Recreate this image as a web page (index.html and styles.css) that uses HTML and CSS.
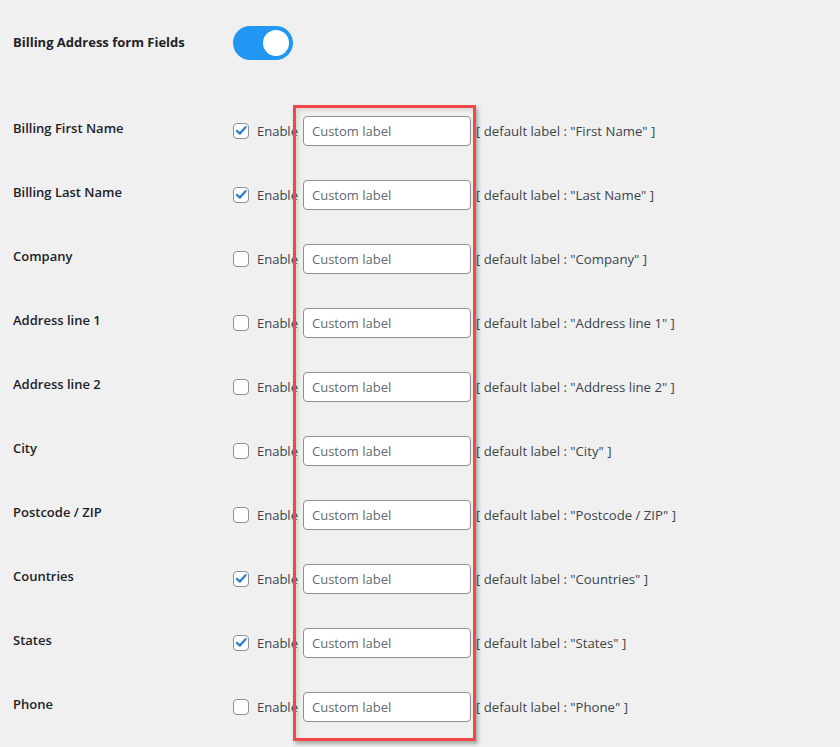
FILE: index.html
```html
<!DOCTYPE html>
<html>
<head>
<meta charset="utf-8">
<link rel="stylesheet" href="styles.css">
</head>
<body>
<div class="page">
  <div class="head-row">
    <div class="head-label">Billing Address form Fields</div>
    <div class="toggle"><span class="knob"></span></div>
  </div>
  <div class="fields">
    <div class="row">
      <div class="label">Billing First Name</div>
      <div class="enable"><span class="cb checked"><svg viewBox="0 0 16 16"><path d="M3.4 7.8 L6.6 11 L13.2 3.6"/></svg></span><span class="en">Enable</span></div>
      <input class="custom" type="text" placeholder="Custom label">
      <span class="def">[ default label : "First Name" ]</span>
    </div>
    <div class="row">
      <div class="label">Billing Last Name</div>
      <div class="enable"><span class="cb checked"><svg viewBox="0 0 16 16"><path d="M3.4 7.8 L6.6 11 L13.2 3.6"/></svg></span><span class="en">Enable</span></div>
      <input class="custom" type="text" placeholder="Custom label">
      <span class="def">[ default label : "Last Name" ]</span>
    </div>
    <div class="row">
      <div class="label">Company</div>
      <div class="enable"><span class="cb"></span><span class="en">Enable</span></div>
      <input class="custom" type="text" placeholder="Custom label">
      <span class="def">[ default label : "Company" ]</span>
    </div>
    <div class="row">
      <div class="label">Address line 1</div>
      <div class="enable"><span class="cb"></span><span class="en">Enable</span></div>
      <input class="custom" type="text" placeholder="Custom label">
      <span class="def">[ default label : "Address line 1" ]</span>
    </div>
    <div class="row">
      <div class="label">Address line 2</div>
      <div class="enable"><span class="cb"></span><span class="en">Enable</span></div>
      <input class="custom" type="text" placeholder="Custom label">
      <span class="def">[ default label : "Address line 2" ]</span>
    </div>
    <div class="row">
      <div class="label">City</div>
      <div class="enable"><span class="cb"></span><span class="en">Enable</span></div>
      <input class="custom" type="text" placeholder="Custom label">
      <span class="def">[ default label : "City" ]</span>
    </div>
    <div class="row">
      <div class="label">Postcode / ZIP</div>
      <div class="enable"><span class="cb"></span><span class="en">Enable</span></div>
      <input class="custom" type="text" placeholder="Custom label">
      <span class="def">[ default label : "Postcode / ZIP" ]</span>
    </div>
    <div class="row">
      <div class="label">Countries</div>
      <div class="enable"><span class="cb checked"><svg viewBox="0 0 16 16"><path d="M3.4 7.8 L6.6 11 L13.2 3.6"/></svg></span><span class="en">Enable</span></div>
      <input class="custom" type="text" placeholder="Custom label">
      <span class="def">[ default label : "Countries" ]</span>
    </div>
    <div class="row">
      <div class="label">States</div>
      <div class="enable"><span class="cb checked"><svg viewBox="0 0 16 16"><path d="M3.4 7.8 L6.6 11 L13.2 3.6"/></svg></span><span class="en">Enable</span></div>
      <input class="custom" type="text" placeholder="Custom label">
      <span class="def">[ default label : "States" ]</span>
    </div>
    <div class="row">
      <div class="label">Phone</div>
      <div class="enable"><span class="cb"></span><span class="en">Enable</span></div>
      <input class="custom" type="text" placeholder="Custom label">
      <span class="def">[ default label : "Phone" ]</span>
    </div>
  </div>
  <div class="highlight"></div>
</div>
</body>
</html>
```
FILE: styles.css
```css
html, body {
  margin: 0;
  padding: 0;
  background: #f0f0f1;
}
body {
  font-family: "Open Sans", "Noto Sans", sans-serif;
  font-size: 13px;
  color: #1d2327;
  width: 840px;
  height: 747px;
  overflow: hidden;
}
.page {
  position: relative;
  padding: 26px 0 0 13px;
}
.head-row {
  display: flex;
  align-items: center;
  height: 34px;
  margin-bottom: 56px;
}
.head-label {
  width: 220px;
  font-weight: 700;
  font-size: 13px;
  color: #1d2327;
  margin-top: -2px;
}
.toggle {
  width: 60px;
  height: 34px;
  border-radius: 17px;
  background: #2196f3;
  display: flex;
  align-items: center;
  justify-content: flex-end;
  padding: 0 4px;
  box-sizing: border-box;
}
.knob {
  width: 26px;
  height: 26px;
  border-radius: 50%;
  background: #fff;
}
.fields {
  display: flex;
  flex-direction: column;
  gap: 34px;
}
.row {
  display: flex;
  align-items: center;
  height: 30px;
}
.label {
  width: 220px;
  font-weight: 600;
  font-size: 13px;
  color: #1d2327;
  margin-top: -7px;
}
.enable {
  width: 70px;
  display: flex;
  align-items: center;
  overflow: hidden;
  white-space: nowrap;
}
.cb {
  width: 16px;
  height: 16px;
  box-sizing: border-box;
  border: 1px solid #8c8f94;
  border-radius: 4px;
  background: #fff;
  flex: none;
  display: flex;
  margin-top: -1px;
  overflow: visible;
}
.cb svg {
  width: 14px;
  height: 14px;
  fill: none;
  stroke: #3582c4;
  stroke-width: 2.6;
  stroke-linecap: round;
  stroke-linejoin: round;
  overflow: visible;
}
.en {
  margin-left: 8px;
  color: #3c434a;
}
.custom {
  width: 168px;
  height: 30px;
  box-sizing: border-box;
  border: 1px solid #8c8f94;
  border-radius: 4px;
  background: #fff;
  padding: 0 8px;
  font-family: inherit;
  font-size: 13px;
  color: #2c3338;
  margin: 0;
}
.custom::placeholder {
  color: #646970;
}
.def {
  margin-left: 5px;
  color: #3c434a;
  font-size: 13.2px;
}
.highlight {
  position: absolute;
  left: 293px;
  top: 105px;
  width: 183px;
  height: 636px;
  box-sizing: border-box;
  border: 3px solid #f24848;
  box-shadow: 2px 3px 4px rgba(0,0,0,0.3), inset 2px 2px 4px rgba(0,0,0,0.12);
}
```
